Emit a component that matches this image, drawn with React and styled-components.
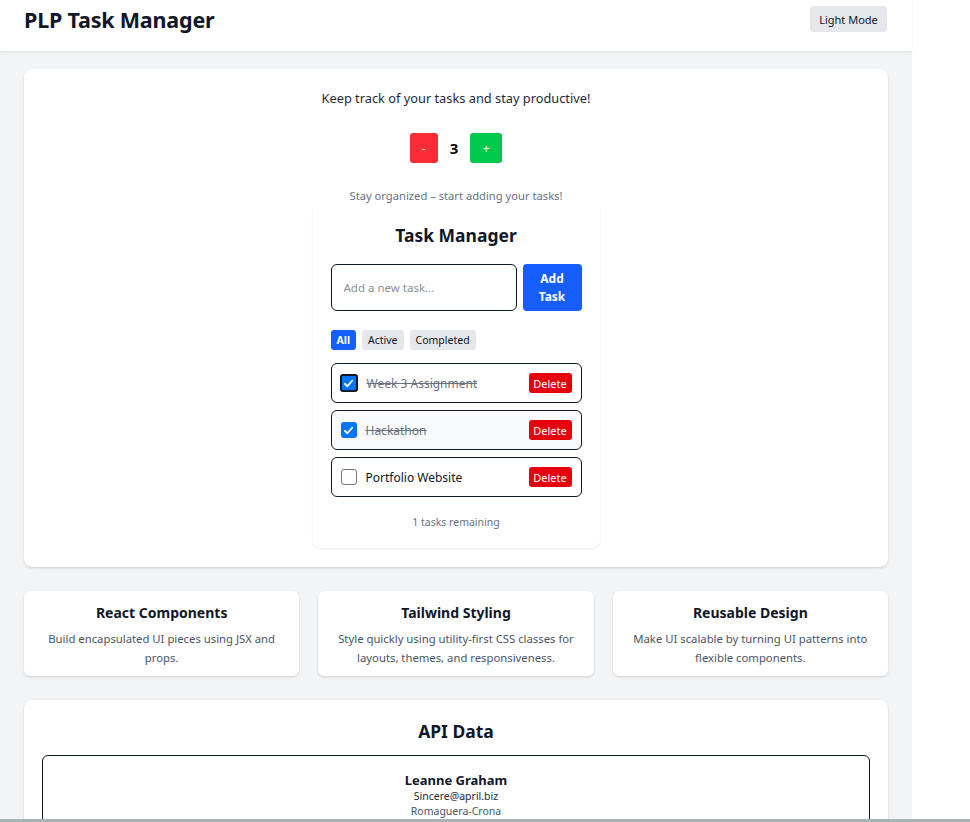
import React, { useState } from "react";
import styled, { createGlobalStyle, css } from "styled-components";

const GlobalStyle = createGlobalStyle`
  * { box-sizing: border-box; }
  body {
    margin: 0;
    background: #ffffff;
    font-family: "Noto Sans", "Open Sans", Arial, sans-serif;
    color: #101828;
  }
  button, input { font-family: inherit; }
`;

const Page = styled.div`
  width: 912px;
  min-height: 100vh;
  background: #f3f4f6;
`;

const Header = styled.header`
  height: 52px;
  background: #ffffff;
  border-bottom: 1px solid #e5e7eb;
  box-shadow: 0 1px 2px rgba(0, 0, 0, 0.06);
  display: flex;
  align-items: flex-start;
  justify-content: space-between;
  padding: 6px 25px 0 24px;
`;

const Brand = styled.h1`
  margin: 0;
  font-size: 21.5px;
  line-height: 28px;
  font-weight: 700;
  letter-spacing: -0.2px;
  color: #101828;
`;

const ModeButton = styled.button`
  border: none;
  background: #e5e7eb;
  color: #101828;
  border-radius: 4px;
  font-size: 11px;
  height: 26px;
  width: 77px;
  padding: 0;
`;

const Main = styled.main`
  padding: 17px 24px 24px;
  display: flex;
  flex-direction: column;
  gap: 24px;
`;

const Card = styled.section`
  background: #ffffff;
  border-radius: 8px;
  box-shadow: 0 1px 3px rgba(0, 0, 0, 0.1), 0 1px 2px rgba(0, 0, 0, 0.06);
  padding: ${({ $pad }) => $pad || "19px 20px 19px"};
  display: flex;
  flex-direction: column;
  align-items: center;
`;

const Tagline = styled.p`
  margin: 0;
  font-size: 12.8px;
  line-height: 20px;
  color: #1e2939;
`;

const Counter = styled.div`
  display: flex;
  align-items: center;
  gap: 12px;
  margin-top: 25px;
`;

const CountButton = styled.button`
  border: none;
  color: #ffffff;
  font-size: 12px;
  height: 30px;
  width: ${({ $wide }) => ($wide ? "32px" : "28px")};
  border-radius: 3px;
  background: ${({ $tone }) => ($tone === "minus" ? "#fb2c36" : "#00c950")};
`;

const CountValue = styled.span`
  font-size: 15px;
  font-weight: 700;
  text-align: center;
  color: #0a0a0a;
`;

const Hint = styled.p`
  margin: 25px 0 0;
  font-size: 11.2px;
  line-height: 16px;
  color: #6a7282;
`;

const TaskCard = styled.div`
  width: 287px;
  margin-top: 1px;
  background: #ffffff;
  border-radius: 8px;
  box-shadow: 0 1px 3px rgba(0, 0, 0, 0.08);
  padding: 16px 18px 18px;
  display: flex;
  flex-direction: column;
`;

const TaskTitle = styled.h2`
  margin: 0;
  text-align: center;
  font-size: 17.5px;
  line-height: 28px;
  font-weight: 700;
  color: #101828;
`;

const AddRow = styled.div`
  display: flex;
  gap: 6px;
  margin-top: 15px;
`;

const TaskInput = styled.input`
  flex: 1;
  min-width: 0;
  height: 47px;
  border: 1px solid #101828;
  border-radius: 6px;
  padding: 0 12px;
  font-size: 11.5px;
  outline: none;
  &::placeholder { color: #8a8f99; }
`;

const AddButton = styled.button`
  width: 59px;
  height: 47px;
  border: none;
  border-radius: 4px;
  background: #155dfc;
  color: #ffffff;
  font-weight: 700;
  font-size: 12px;
  line-height: 18px;
  padding: 0 8px;
`;

const Filters = styled.div`
  display: flex;
  gap: 6px;
  margin-top: 19px;
`;

const FilterButton = styled.button`
  border: none;
  height: 20px;
  padding: 0 6px;
  border-radius: 3px;
  font-size: 10.5px;
  background: #e5e7eb;
  color: #101828;
  ${({ $active }) =>
    $active &&
    css`
      background: #155dfc;
      color: #ffffff;
      font-weight: 700;
    `}
`;

const TaskList = styled.ul`
  list-style: none;
  margin: 13px 0 0;
  padding: 0;
  display: flex;
  flex-direction: column;
  gap: 7px;
`;

const TaskRow = styled.li`
  height: 40px;
  border: 1px solid #101828;
  border-radius: 6px;
  display: flex;
  align-items: center;
  padding: 0 9px;
  background: ${({ $shade }) => ($shade ? "#f9fafb" : "#ffffff")};
`;

const Check = styled.span`
  width: 16px;
  height: 16px;
  border-radius: 3px;
  flex: none;
  display: flex;
  align-items: center;
  justify-content: center;
  background: ${({ $on }) => ($on ? "#0075ff" : "#ffffff")};
  border: ${({ $on, $focus }) =>
    $focus ? "2px solid #101828" : $on ? "none" : "1px solid #767676"};
  ${({ $focus }) => $focus && css`width: 18px; height: 18px; margin-left: -1px;`}
`;

const TaskText = styled.span`
  flex: 1;
  margin-left: 9px;
  font-size: 12px;
  color: ${({ $done }) => ($done ? "#6a7282" : "#101828")};
  text-decoration: ${({ $done }) => ($done ? "line-through" : "none")};
`;

const DeleteButton = styled.button`
  border: none;
  background: #e7000b;
  color: #ffffff;
  font-size: 11px;
  height: 20px;
  width: 43px;
  padding: 0;
  border-radius: 3px;
`;

const Remaining = styled.p`
  margin: 17px 0 0;
  text-align: center;
  font-size: 10.5px;
  line-height: 16px;
  color: #6a7282;
`;

const Features = styled.div`
  display: grid;
  grid-template-columns: repeat(3, 1fr);
  gap: 19px;
`;

const FeatureCard = styled.article`
  background: #ffffff;
  border-radius: 6px;
  box-shadow: 0 1px 3px rgba(0, 0, 0, 0.1), 0 1px 2px rgba(0, 0, 0, 0.06);
  padding: 12px 14px 9px;
  text-align: center;
`;

const FeatureTitle = styled.h3`
  margin: 0;
  font-size: 14px;
  line-height: 20px;
  font-weight: 700;
  color: #101828;
`;

const FeatureText = styled.p`
  margin: 6px 0 0;
  font-size: 11.3px;
  line-height: 19px;
  color: #4a5565;
`;

const ApiTitle = styled.h2`
  margin: 0;
  font-size: 17.5px;
  line-height: 28px;
  font-weight: 700;
  color: #101828;
`;

const UserList = styled.div`
  align-self: stretch;
  margin-top: 10px;
  display: flex;
  flex-direction: column;
  gap: 12px;
`;

const UserBox = styled.div`
  border: 1px solid #101828;
  border-radius: 6px;
  padding: 15px 16px 14px;
  text-align: center;
`;

const UserName = styled.div`
  font-size: 13px;
  line-height: 18px;
  font-weight: 700;
  color: #101828;
`;

const UserLine = styled.div`
  font-size: 10.5px;
  line-height: 15px;
  color: ${({ $muted }) => ($muted ? "#4a5565" : "#1e2939")};
`;

const BottomBar = styled.div`
  position: fixed;
  left: 0;
  right: 0;
  bottom: 0;
  height: 3px;
  background: #a8b4b4;
`;

const CheckMark = () => (
  <svg width="11" height="11" viewBox="0 0 12 12">
    <path d="M2 6.3 L4.8 9 L10 3" fill="none" stroke="#fff" strokeWidth="2" strokeLinecap="round" strokeLinejoin="round" />
  </svg>
);

const initialTasks = [
  { id: 1, text: "Week 3 Assignment", done: true, focus: true },
  { id: 2, text: "Hackathon", done: true, shade: true },
  { id: 3, text: "Portfolio Website", done: false },
];

const features = [
  { title: "React Components", text: "Build encapsulated UI pieces using JSX and props." },
  { title: "Tailwind Styling", text: "Style quickly using utility-first CSS classes for layouts, themes, and responsiveness." },
  { title: "Reusable Design", text: "Make UI scalable by turning UI patterns into flexible components." },
];

const users = [
  { name: "Leanne Graham", email: "Sincere@april.biz", company: "Romaguera-Crona" },
  { name: "Ervin Howell", email: "Shanna@melissa.tv", company: "Deckow-Crist" },
  { name: "Clementine Bauch", email: "Nathan@yesenia.net", company: "Romaguera-Jacobson" },
];

export default function App() {
  const [count, setCount] = useState(3);
  const [tasks] = useState(initialTasks);
  const remaining = tasks.filter((t) => !t.done).length;

  return (
    <>
      <GlobalStyle />
      <Page>
        <Header>
          <Brand>PLP Task Manager</Brand>
          <ModeButton>Light Mode</ModeButton>
        </Header>
        <Main>
          <Card>
            <Tagline>Keep track of your tasks and stay productive!</Tagline>
            <Counter>
              <CountButton $tone="minus" onClick={() => setCount(count - 1)}>-</CountButton>
              <CountValue>{count}</CountValue>
              <CountButton $tone="plus" $wide onClick={() => setCount(count + 1)}>+</CountButton>
            </Counter>
            <Hint>Stay organized – start adding your tasks!</Hint>
            <TaskCard>
              <TaskTitle>Task Manager</TaskTitle>
              <AddRow>
                <TaskInput placeholder="Add a new task..." />
                <AddButton>Add Task</AddButton>
              </AddRow>
              <Filters>
                <FilterButton $active>All</FilterButton>
                <FilterButton>Active</FilterButton>
                <FilterButton>Completed</FilterButton>
              </Filters>
              <TaskList>
                {tasks.map((t) => (
                  <TaskRow key={t.id} $shade={t.shade}>
                    <Check $on={t.done} $focus={t.focus}>{t.done && <CheckMark />}</Check>
                    <TaskText $done={t.done}>{t.text}</TaskText>
                    <DeleteButton>Delete</DeleteButton>
                  </TaskRow>
                ))}
              </TaskList>
              <Remaining>{remaining} tasks remaining</Remaining>
            </TaskCard>
          </Card>

          <Features>
            {features.map((f) => (
              <FeatureCard key={f.title}>
                <FeatureTitle>{f.title}</FeatureTitle>
                <FeatureText>{f.text}</FeatureText>
              </FeatureCard>
            ))}
          </Features>

          <Card $pad="17px 18px 18px">
            <ApiTitle>API Data</ApiTitle>
            <UserList>
              {users.map((u) => (
                <UserBox key={u.name}>
                  <UserName>{u.name}</UserName>
                  <UserLine>{u.email}</UserLine>
                  <UserLine $muted>{u.company}</UserLine>
                </UserBox>
              ))}
            </UserList>
          </Card>
        </Main>
      </Page>
      <BottomBar />
    </>
  );
}
